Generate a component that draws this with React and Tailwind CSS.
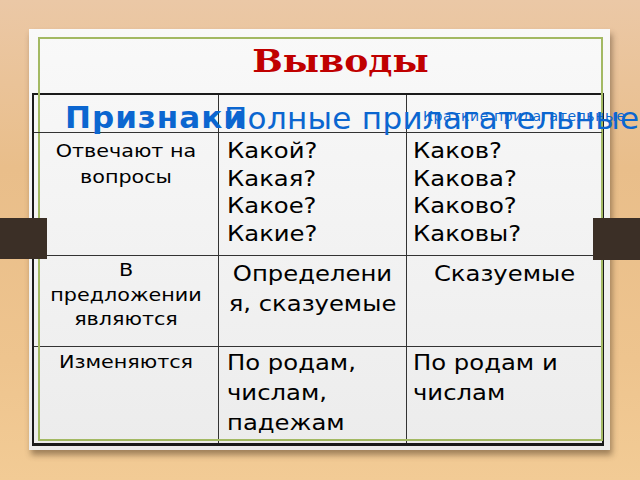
export default function App() {
  return (
    <div className="relative w-[640px] h-[480px] overflow-hidden bg-[linear-gradient(180deg,#ebc8a6_0%,#e9be8a_35%,#eec48e_75%,#f2cb95_100%)] pt-[29px] pl-[29px] font-['DejaVu_Sans',sans-serif]">
      {/* Paper */}
      <div className="relative w-[581px] h-[421px] bg-gradient-to-b from-[#f9f9f9] to-[#ececec] shadow-[2px_5px_6px_rgba(60,40,20,0.45)]">
        {/* Green frame */}
        <div className="pointer-events-none absolute left-[9px] top-[8px] right-[7px] bottom-[9px] border-2 border-[#a3b963]"></div>

        <div className="h-[64px] pl-[42px] pt-[12px] text-center">
          <h1 className="scale-x-[1.13] font-['DejaVu_Serif',serif] text-[32px] font-bold leading-[40px] text-[#c00000]">
            Выводы
          </h1>
        </div>

        {/* Table */}
        <div className="ml-[3px] w-[572px] border-2 border-[#1a1a1a] border-b-[3px] grid grid-cols-[185px_188px_195px] grid-rows-[38px_123px_91px_96px]">
          <div className="border-r border-b border-[#333] pl-[31px] pt-[7px] whitespace-nowrap text-[31px] font-bold leading-none tracking-[1px] text-[#0b66d0] relative z-10">
            Признаки
          </div>
          <div className="border-r border-b border-[#333] pl-[5px] pt-[8px] whitespace-nowrap text-[31px] leading-none tracking-[0.3px] text-[#0b66d0] relative z-10">
            Полные прилагательные
          </div>
          <div className="border-b border-[#333] pl-[16px] pt-[14px] whitespace-nowrap text-[14px] leading-none tracking-[0.6px] text-[#0b66d0] relative z-10">
            Краткие прилагательные
          </div>

          <div className="border-r border-b border-[#333] pt-[5px] text-center text-[18px] leading-[26px] text-black">
            <div className="scale-x-[1.15]">
              Отвечают на
              <br />
              вопросы
            </div>
          </div>
          <div className="border-r border-b border-[#333] pl-[8px] pt-[4px] text-[21.5px] leading-[27.5px] text-black">
            <div className="origin-left scale-x-[1.13]">
              Какой?
              <br />
              Какая?
              <br />
              Какое?
              <br />
              Какие?
            </div>
          </div>
          <div className="border-b border-[#333] pl-[6px] pt-[4px] text-[21.5px] leading-[27.5px] text-black">
            <div className="origin-left scale-x-[1.13]">
              Каков?
              <br />
              Какова?
              <br />
              Каково?
              <br />
              Каковы?
            </div>
          </div>

          <div className="border-r border-b border-[#333] pt-[2px] text-center text-[18px] leading-[24.5px] text-black">
            <div className="scale-x-[1.15]">
              В
              <br />
              предложении
              <br />
              являются
            </div>
          </div>
          <div className="border-r border-b border-[#333] pt-[3px] text-center text-[21.5px] leading-[30px] text-black">
            <div className="scale-x-[1.13]">
              Определени
              <br />
              я, сказуемые
            </div>
          </div>
          <div className="border-b border-[#333] pt-[3px] text-center text-[21.5px] leading-[30px] text-black">
            <div className="scale-x-[1.13]">Сказуемые</div>
          </div>

          <div className="border-r border-[#333] pt-[2px] text-center text-[18px] leading-[26px] text-black">
            <div className="scale-x-[1.15]">Изменяются</div>
          </div>
          <div className="border-r border-[#333] pl-[8px] pt-[1px] text-[21.5px] leading-[30px] text-black">
            <div className="origin-left scale-x-[1.13]">
              По родам,
              <br />
              числам,
              <br />
              падежам
            </div>
          </div>
          <div className="pl-[6px] pt-[1px] text-[21.5px] leading-[30px] text-black">
            <div className="origin-left scale-x-[1.13]">
              По родам и
              <br />
              числам
            </div>
          </div>
        </div>
      </div>

      {/* Dark bars on the sides */}
      <div className="absolute left-0 top-[218px] w-[47px] h-[41px] bg-[#3b2f26]"></div>
      <div className="absolute right-0 top-[218px] w-[47px] h-[42px] bg-[#3b2f26]"></div>
    </div>
  );
}
